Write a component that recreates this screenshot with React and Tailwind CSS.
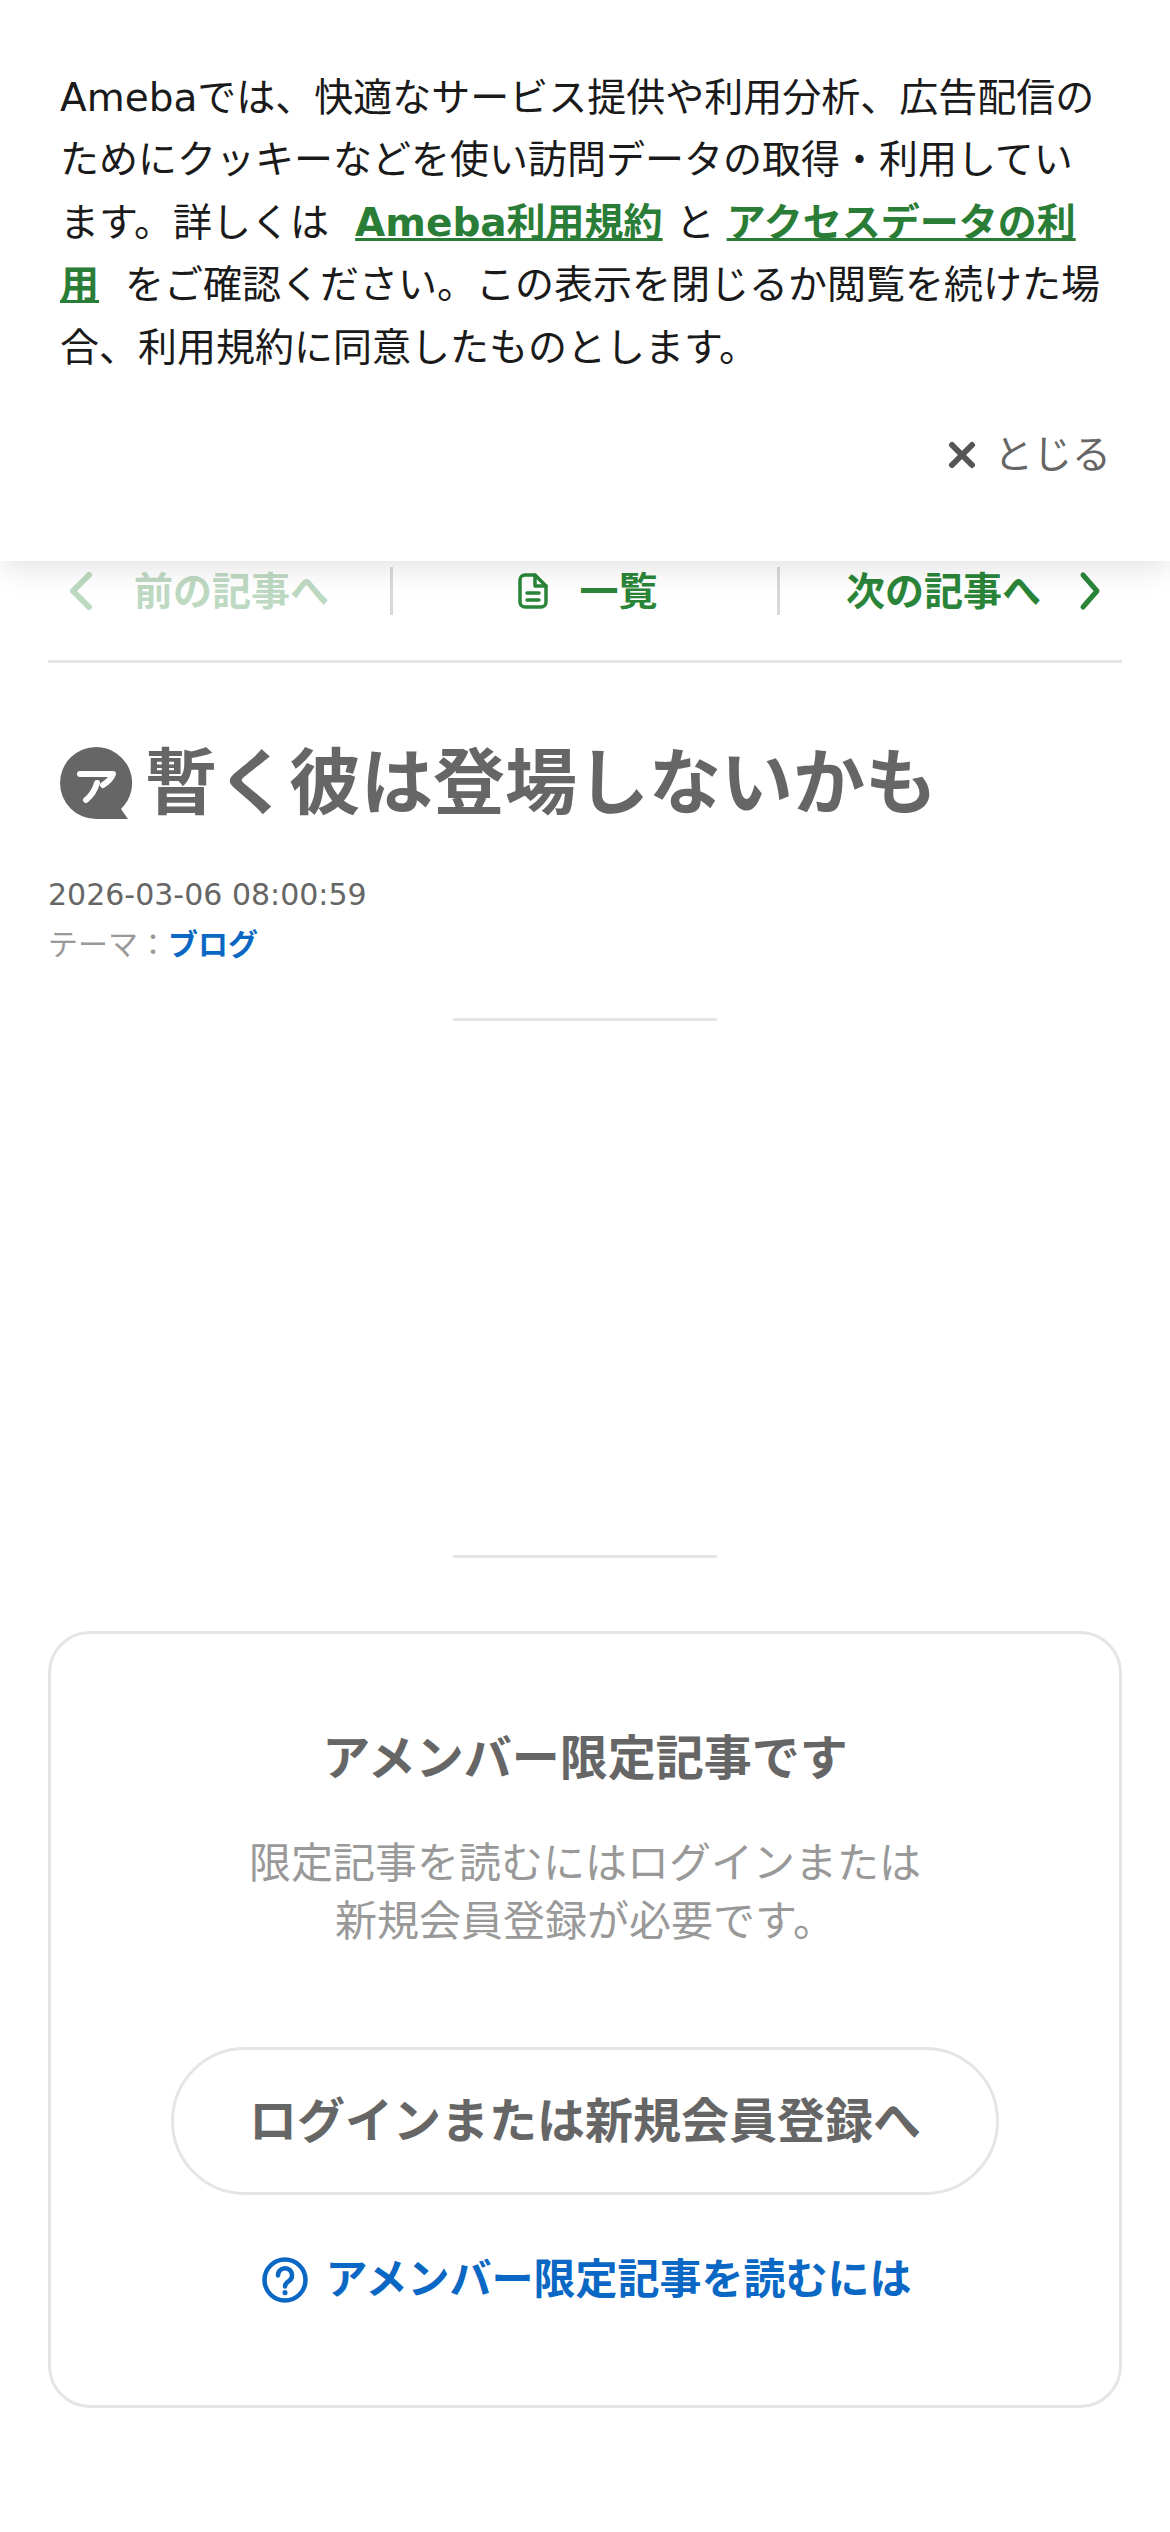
import React from "react";

const FONT = "font-['DejaVu_Sans','Noto_Sans_CJK_JP',sans-serif]";

const NavBar = () => {
  return (
    <div className="flex h-[98px] mx-[48px] border-b-[3px] border-[#e5e5e5] pt-[2px] items-start">
      <div className="w-[345px] h-[48px] flex items-center text-[#2a8539] border-r-[3px] border-[#d9d9d9] pl-[20px]">
        <svg className="opacity-30" width="26" height="40" viewBox="0 0 26 40" fill="none" stroke="currentColor" strokeWidth="6" strokeLinecap="round" strokeLinejoin="round">
          <path d="M21 4 5 20l16 16" />
        </svg>
        <span className="ml-[40px] opacity-30 text-[39px] font-bold leading-none">前の記事へ</span>
      </div>
      <div className="w-[387px] h-[48px] flex items-center justify-center text-[#2a8539] border-r-[3px] border-[#d9d9d9]">
        <svg className="ml-[6px]" width="30" height="36" viewBox="0 0 30 36" fill="none" stroke="currentColor" strokeWidth="3.5" strokeLinejoin="round" strokeLinecap="round">
          <path d="M7 2h10l11 11v16a5 5 0 0 1-5 5H7a5 5 0 0 1-5-5V7a5 5 0 0 1 5-5Z" />
          <path d="M17 2v11h11M9 20h12M9 27h12" />
        </svg>
        <span className="ml-[31px] text-[39px] font-bold leading-none">一覧</span>
      </div>
      <div className="flex-1 h-[48px] flex items-center justify-end text-[#2a8539] pr-[20px]">
        <span className="mr-[37px] text-[39px] font-bold leading-none">次の記事へ</span>
        <svg width="24" height="40" viewBox="0 0 24 40" fill="none" stroke="currentColor" strokeWidth="5" strokeLinecap="round" strokeLinejoin="round">
          <path d="M5 4l14 16L5 36" />
        </svg>
      </div>
    </div>
  );
};

const App = () => {
  return (
    <div className={`relative w-[1170px] h-[2532px] bg-white overflow-hidden ${FONT}`}>
      {/* Cookie notice */}
      <div className="absolute top-0 left-0 right-0 z-10 h-[561px] bg-white shadow-[0_6px_30px_rgba(0,0,0,0.12)] pt-[67px] pl-[60px] pr-[60px]">
        <p className="text-[39px] leading-[62.4px] text-[#1a1a1a]">
          Amebaでは、快適なサービス提供や利用分析、広告配信のためにクッキーなどを使い訪問データの取得・利用しています。詳しくは
          <a className="ml-[26px] mr-[13px] font-bold text-[#2a7d36] underline">Ameba利用規約</a>
          と
          <a className="ml-[12px] mr-[26px] font-bold text-[#2a7d36] underline">アクセスデータの利用</a>
          をご確認ください。この表示を閉じるか閲覧を続けた場合、利用規約に同意したものとします。
        </p>
        <div className="flex justify-end items-center mt-[45px] mr-[-1px] text-[#666]">
          <svg width="28" height="28" viewBox="0 0 28 28" stroke="#555" strokeWidth="6" strokeLinecap="round">
            <path d="M4 4l20 20M24 4 4 24" />
          </svg>
          <span className="ml-[18px] text-[39px] leading-[62px]">とじる</span>
        </div>
      </div>

      {/* Page under the notice */}
      <div className="pt-[565px]">
        <NavBar />
        <div className="mx-[48px]">
          <h1 className="flex items-center mt-[70px] text-[72px] leading-[100px] font-bold text-[#666]">
            <svg className="ml-[12px] mr-[13px] shrink-0" width="72" height="72" viewBox="0 0 72 72">
              <path d="M36 0a36 36 0 1 0 0 72h32l-7-10A36 36 0 0 0 36 0Z" fill="#666" />
              <path d="M20 27h33c-2 5-5 8-10 11M37 36c-2 7-6 13-11 17" fill="none" stroke="#fff" strokeWidth="6" strokeLinecap="round" strokeLinejoin="round" />
            </svg>
            暫く彼は登場しないかも
          </h1>
          <div className="mt-[37px] text-[30px] leading-[50px] text-[#666]">2026-03-06 08:00:59</div>
          <div className="text-[30px] leading-[50px] text-[#999]">
            テーマ：<a className="font-bold text-[#0a68c4]">ブログ</a>
          </div>
          <div className="w-[264px] h-[3px] bg-[#e5e5e5] mx-auto mt-[48px]"></div>
          <div className="h-[534px]"></div>
          <div className="w-[264px] h-[3px] bg-[#e5e5e5] mx-auto"></div>

          {/* Members only card */}
          <div className="mt-[73px] h-[777px] border-[3px] border-[#e5e5e5] rounded-[42px] flex flex-col items-center pt-[88px]">
            <h2 className="text-[48px] leading-[72px] font-bold text-[#666]">アメンバー限定記事です</h2>
            <p className="mt-[41px] text-[42px] leading-[58px] text-[#999] text-center">
              限定記事を読むにはログインまたは
              <br />
              新規会員登録が必要です。
            </p>
            <a className="mt-[96px] w-[828px] h-[148px] border-[3px] border-[#e5e5e5] rounded-full flex items-center justify-center text-[48px] font-bold text-[#666]">
              ログインまたは新規会員登録へ
            </a>
            <a className="mt-[55px] ml-[3px] flex items-center text-[#0a68c4] text-[42px] leading-[60px] font-bold">
              <svg className="mr-[18px]" width="46" height="46" viewBox="0 0 46 46" fill="none" stroke="currentColor" strokeWidth="4.5" strokeLinecap="round">
                <circle cx="23" cy="23" r="20.5" />
                <path d="M16 18.5a7 7 0 1 1 11 5.5c-2.5 1.6-4 2.8-4 5.5" />
                <path d="M23 35.5v.2" strokeWidth="5" />
              </svg>
              アメンバー限定記事を読むには
            </a>
          </div>
        </div>
      </div>
    </div>
  );
};

export default App;
